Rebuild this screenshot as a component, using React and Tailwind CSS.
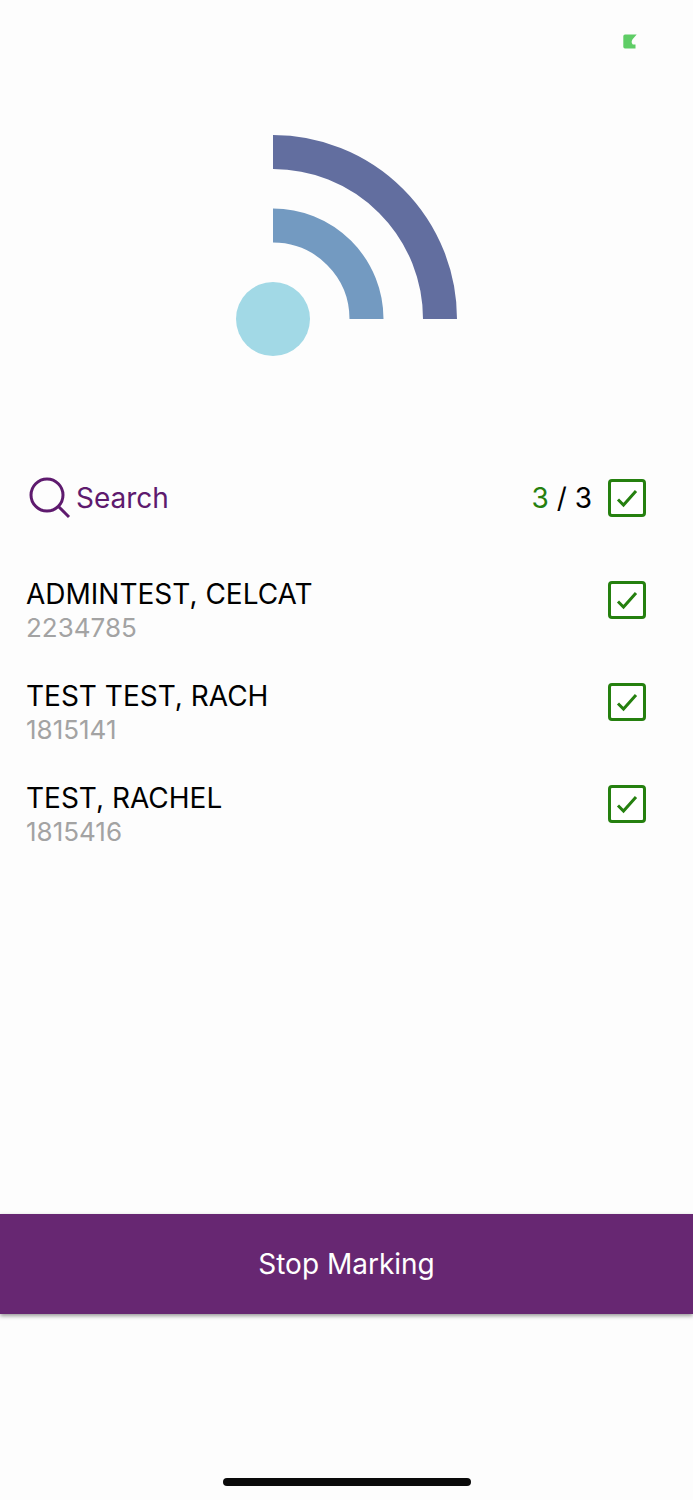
import { useState } from 'react';

const STUDENTS = [
  { id: '2234785', name: 'ADMINTEST, CELCAT' },
  { id: '1815141', name: 'TEST TEST, RACH' },
  { id: '1815416', name: 'TEST, RACHEL' }
];

const Logo = () => (
  <svg viewBox="0 0 222 222" className="w-[222px] h-[222px]" fill="none" role="img" aria-label="Signal">
    <path d="M37 17A167 167 0 0 1 204 184" stroke="#626e9f" strokeWidth="34" />
    <path d="M37 90.5A93.5 93.5 0 0 1 130.5 184" stroke="#739ac1" strokeWidth="34" />
    <circle cx="37" cy="184" r="37" fill="#a2d9e6" />
  </svg>
);

// Native checkbox with the tick stacked on top of it in the same grid cell
const MarkBox = ({ label, checked, onChange }) => (
  <span className="grid shrink-0 w-[38px] h-[38px]">
    <input
      type="checkbox"
      aria-label={label}
      checked={checked}
      onChange={onChange}
      className="peer col-start-1 row-start-1 w-full h-full appearance-none rounded-[4px] border-3 border-[#25800f] bg-white"
    />
    <svg
      viewBox="0 0 38 38"
      className="invisible peer-checked:visible pointer-events-none col-start-1 row-start-1 w-full h-full"
      fill="none"
      stroke="#25800f"
      strokeWidth="3"
    >
      <path d="M10 20.5L15.5 26L28 12" />
    </svg>
  </span>
);

const App = () => {
  const [search, setSearch] = useState('');
  const [marked, setMarked] = useState(STUDENTS.map((s) => s.id));

  const allMarked = marked.length === STUDENTS.length;
  const visible = STUDENTS.filter((s) => s.name.toLowerCase().includes(search.toLowerCase()));

  const toggle = (id) => {
    setMarked(marked.includes(id) ? marked.filter((m) => m !== id) : [...marked, id]);
  };

  return (
    <div className="min-h-screen flex flex-col bg-[#fdfdfd] font-['Inter',sans-serif] text-black">
      {/* Status bar */}
      <div className="flex justify-end pt-[34px] pr-14">
        <svg viewBox="0 0 14 15" className="w-[14px] h-[15px]" fill="#5fcd66" aria-hidden="true">
          <path d="M2 0.5H13.7L9.6 5.2Q7.6 8 9.8 10.5H12.5V14.5H2Q0.3 14.5 0.3 12.8V2.2Q0.3 0.5 2 0.5Z" />
        </svg>
      </div>

      {/* Logo */}
      <div className="flex justify-center pt-[86px]">
        <Logo />
      </div>

      {/* Search and totals */}
      <div className="flex items-center pt-[119px] pl-7 pr-[47px]">
        <label className="flex flex-1 min-w-0 items-center gap-1 text-[#5e1a6e]">
          <svg viewBox="0 0 44 44" className="shrink-0 w-11 h-11" fill="none" stroke="currentColor" strokeWidth="3">
            <circle cx="19" cy="19" r="16" />
            <path d="M30 30L41 41" />
          </svg>
          <input
            type="text"
            aria-label="Search"
            placeholder="Search"
            value={search}
            onChange={(e) => setSearch(e.target.value)}
            className="w-full min-w-0 bg-transparent text-[28px] leading-9 outline-none placeholder:text-[#5e1a6e]"
          />
        </label>
        <p className="mr-4 text-[28px] leading-9 whitespace-nowrap">
          <span className="text-[#25800f]">{marked.length}</span> / {STUDENTS.length}
        </p>
        <MarkBox
          label="Mark all"
          checked={allMarked}
          onChange={() => setMarked(allMarked ? [] : STUDENTS.map((s) => s.id))}
        />
      </div>

      {/* Students */}
      <ul className="flex-1 flex flex-col gap-[34px] pt-14 pl-[26px] pr-[47px]">
        {visible.map((student) => (
          <li key={student.id} className="flex items-start justify-between">
            <div>
              <p className="text-[28px] leading-9">{student.name}</p>
              <p className="text-[26px] leading-8 text-[#a3a3a3]">{student.id}</p>
            </div>
            <div className="pt-[5px]">
              <MarkBox
                label={student.name}
                checked={marked.includes(student.id)}
                onChange={() => toggle(student.id)}
              />
            </div>
          </li>
        ))}
      </ul>

      <button
        type="button"
        className="w-full h-[100px] bg-[#672772] text-[28px] text-white shadow-[0_2px_4px_rgba(0,0,0,0.4)]"
      >
        Stop Marking
      </button>

      {/* Home indicator */}
      <div className="flex justify-center pt-[164px] pb-[14px]">
        <div className="w-[248px] h-2 rounded-full bg-[#0a0a0a]" />
      </div>
    </div>
  );
};

export default App;
